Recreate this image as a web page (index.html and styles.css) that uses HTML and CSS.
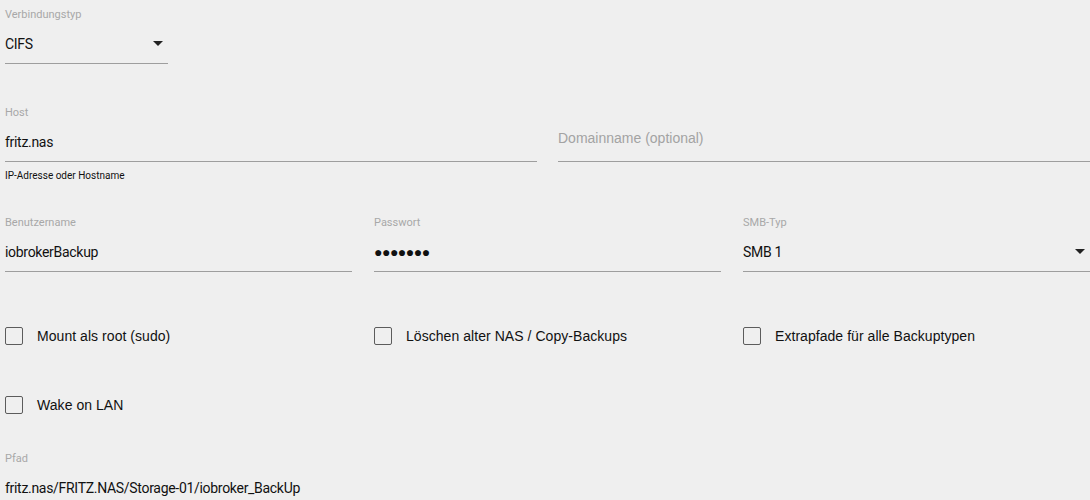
FILE: index.html
```html
<!DOCTYPE html>
<html lang="de">
<head>
    <meta charset="UTF-8">
    <title>Backup - CIFS</title>
    <link rel="stylesheet" href="styles.css">
</head>
<body>
    <div class="form">

        <div class="row row-type">
            <div class="field field-small">
                <label class="field-label">Verbindungstyp</label>
                <div class="field-input select">
                    <span class="value">CIFS</span>
                    <span class="arrow"></span>
                </div>
            </div>
        </div>

        <div class="row row-host">
            <div class="field">
                <label class="field-label">Host</label>
                <div class="field-input">
                    <span class="value">fritz.nas</span>
                </div>
                <div class="helper">IP-Adresse oder Hostname</div>
            </div>
            <div class="field">
                <label class="field-label">&nbsp;</label>
                <div class="field-input">
                    <span class="placeholder">Domainname (optional)</span>
                </div>
            </div>
        </div>

        <div class="row row-three">
            <div class="field">
                <label class="field-label">Benutzername</label>
                <div class="field-input">
                    <span class="value">iobrokerBackup</span>
                </div>
            </div>
            <div class="field">
                <label class="field-label">Passwort</label>
                <div class="field-input">
                    <span class="value dots">&#9679;&#9679;&#9679;&#9679;&#9679;&#9679;&#9679;</span>
                </div>
            </div>
            <div class="field">
                <label class="field-label">SMB-Typ</label>
                <div class="field-input select">
                    <span class="value">SMB 1</span>
                    <span class="arrow"></span>
                </div>
            </div>
        </div>

        <div class="row row-three row-checks">
            <label class="check"><span class="box"></span>Mount als root (sudo)</label>
            <label class="check"><span class="box"></span>Löschen alter NAS / Copy-Backups</label>
            <label class="check"><span class="box"></span>Extrapfade für alle Backuptypen</label>
        </div>

        <div class="row row-three row-wake">
            <label class="check"><span class="box"></span>Wake on LAN</label>
        </div>

        <div class="row row-path">
            <div class="field plain">
                <label class="field-label">Pfad</label>
                <div class="field-input">
                    <span class="value">fritz.nas/FRITZ.NAS/Storage-01/iobroker_BackUp</span>
                </div>
            </div>
        </div>

    </div>
</body>
</html>
```

FILE: styles.css
```css
:root {
    --background: #efefef;
    --text-dark: #111111;
    --text-label: #a8a8a8;
    --line: #9e9e9e;
    --box: #5c5c5c;
}

* {
    box-sizing: border-box;
    margin: 0;
    padding: 0;
}

body {
    background-color: var(--background);
    color: var(--text-dark);
    font-family: 'Segoe UI', Roboto, sans-serif;
    overflow: hidden;
}

.form {
    padding: 7px 0 0 5px;
}

.row {
    display: grid;
    column-gap: 21px;
}

.row-host {
    grid-template-columns: 1fr 1fr;
    margin-top: 41px;
}

.row-three {
    grid-template-columns: 1fr 1fr 1fr;
    column-gap: 22px;
}

.row-host + .row-three {
    margin-top: 32px;
}

.field-small {
    width: 163px;
}

.field-label {
    display: block;
    font-family: Roboto, sans-serif;
    font-size: 11px;
    line-height: 16px;
    height: 16px;
    color: var(--text-label);
    margin-bottom: 10px;
}

.field-input {
    display: flex;
    align-items: center;
    height: 31px;
    padding-bottom: 9px;
    border-bottom: 1px solid var(--line);
}

.plain .field-input {
    border-bottom: none;
}

.value {
    font-size: 14px;
    letter-spacing: -0.3px;
    line-height: 22px;
}

.dots {
    font-size: 14px;
    letter-spacing: -0.5px;
}

.placeholder {
    font-family: 'Liberation Sans', Arial, sans-serif;
    font-size: 14px;
    line-height: 22px;
    color: #a3a3a3;
    position: relative;
    top: -4px;
}

.select {
    justify-content: space-between;
}

.arrow {
    width: 0;
    height: 0;
    border-left: 5px solid transparent;
    border-right: 5px solid transparent;
    border-top: 5px solid #222;
    margin-right: 5px;
}

.helper {
    font-family: Roboto, sans-serif;
    font-size: 10px;
    line-height: 14px;
    margin-top: 7px;
}

.row-checks {
    margin-top: 55px;
}

.row-wake {
    margin-top: 51px;
}

.check {
    display: flex;
    align-items: center;
    font-family: 'Liberation Sans', Arial, sans-serif;
    font-size: 14px;
    letter-spacing: 0.05px;
    line-height: 18px;
    color: var(--text-dark);
}

.box {
    width: 18px;
    height: 18px;
    border: 1.5px solid var(--box);
    border-radius: 2px;
    margin-right: 14px;
    flex-shrink: 0;
}

.row-path {
    margin-top: 37px;
}
```
